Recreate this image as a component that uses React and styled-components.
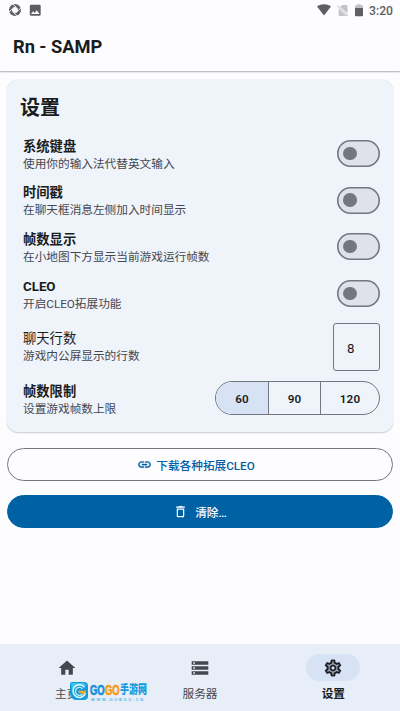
import React, { useState } from "react";
import styled, { createGlobalStyle } from "styled-components";
import {
    MdHome,
    MdImage,
    MdLink,
    MdOutlineDelete,
    MdOutlineSettings,
    MdStorage,
} from "react-icons/md";

const ink = "#191c20";
const muted = "#45474e";
const outline = "#73777f";
const primary = "#0061a4";
const selected = "#d7e3f5";

const GlobalStyle = createGlobalStyle`
    * {
        box-sizing: border-box;
    }

    body {
        margin: 0;
        background: #fdfcff;
        color: ${ink};
        font-family: Roboto, "Noto Sans CJK SC", sans-serif;
    }

    button, input {
        font-family: inherit;
        color: inherit;
        margin: 0;
        padding: 0;
    }
`;

const Screen = styled.div`
    display: flex;
    flex-direction: column;
    width: 400px;
    height: 711px;
    overflow: hidden;
`;

const StatusBar = styled.div`
    display: flex;
    justify-content: space-between;
    align-items: center;
    height: 20px;
    flex: none;
    padding: 0 7px 0 8px;
    color: #5f5f61;
    font-size: 12.2px;
    font-weight: 500;
`;

const StatusGroup = styled.div`
    display: flex;
    align-items: center;
    gap: ${(props) => props.gap}px;
`;

const Clock = styled.span`
    line-height: 20px;
    padding-top: 1px;
`;

const AppBar = styled.header`
    display: flex;
    align-items: center;
    height: 51px;
    flex: none;
    padding: 1px 0 0 13px;
    font-size: 18.3px;
    font-weight: 700;
    letter-spacing: -0.05px;
    box-shadow: 0 1px 1.5px rgba(0, 0, 0, 0.32);
`;

const Content = styled.main`
    display: flex;
    flex-direction: column;
    flex: 1;
    padding: 9px 7px 0;
`;

const Card = styled.section`
    height: 352px;
    padding: 13px 13px 0 16px;
    margin-bottom: 16px;
    border-radius: 11px;
    background: #eff3fa;
    box-shadow: 0 0.5px 1.5px rgba(0, 0, 0, 0.2);
`;

const CardTitle = styled.h2`
    margin: 0 0 7px -3px;
    font-size: 20px;
    line-height: 30px;
    font-weight: 700;
`;

const SettingRow = styled.div`
    display: flex;
    align-items: center;
    justify-content: space-between;
    height: ${(props) => props.height || 46.7}px;
`;

const SettingText = styled.div`
    padding-top: ${(props) => props.shift}px;
`;

const SettingName = styled.div`
    font-size: 13.3px;
    line-height: 18px;
    font-weight: ${(props) => (props.light ? 400 : 700)};
`;

const SettingHint = styled.div`
    font-size: 11.67px;
    line-height: 17px;
    color: ${muted};
`;

const Track = styled.button`
    display: flex;
    align-items: center;
    width: 43.5px;
    height: 27px;
    padding-left: 6.5px;
    border: none;
    border-radius: 14px;
    background: #dfe2eb;
    box-shadow: inset 0 0 0 1.6px ${outline};
`;

const Thumb = styled.span`
    width: 13.5px;
    height: 13.5px;
    border-radius: 50%;
    background: ${outline};
    transform: translateX(${(props) => (props.on ? 16 : 0)}px);
`;

const NumberField = styled.input`
    width: 47px;
    height: 48px;
    padding: 2px 0 0 13px;
    border: 1px solid ${outline};
    border-radius: 3px;
    background: transparent;
    font-size: 13.3px;
    outline: none;
`;

const Segments = styled.div`
    display: flex;
    width: 165px;
    height: 34px;
    border: 1px solid ${outline};
    border-radius: 17px;
    overflow: hidden;
`;

const Segment = styled.button`
    width: ${(props) => props.width}px;
    border: none;
    border-left: ${(props) => (props.first ? "none" : `1px solid ${outline}`)};
    padding-top: 1px;
    background: ${(props) => (props.active ? selected : "transparent")};
    font-size: 11.67px;
    font-weight: 600;
    letter-spacing: 0.1px;
`;

const WideButton = styled.button`
    display: flex;
    align-items: center;
    justify-content: center;
    gap: ${(props) => props.gap}px;
    height: 33px;
    flex: none;
    margin-bottom: 14px;
    padding: 0 ${(props) => (props.filled ? 0 : 8)}px 1px 0;
    border: 1px solid ${(props) => (props.filled ? primary : outline)};
    border-radius: 17px;
    background: ${(props) => (props.filled ? primary : "transparent")};
    color: ${(props) => (props.filled ? "#fff" : primary)};
    font-size: 11.67px;
    font-weight: 500;
`;

const LinkIcon = styled(MdLink)`
    path:not([fill="none"]) {
        stroke: currentColor;
        stroke-width: 0.5px;
    }
`;

const NavBar = styled.nav`
    position: relative;
    display: grid;
    grid-template-columns: repeat(3, 1fr);
    height: 67px;
    flex: none;
    padding-top: 10px;
    background: #e8eef7;
`;

const NavItem = styled.div`
    display: flex;
    flex-direction: column;
    align-items: center;
    color: ${(props) => (props.active ? ink : muted)};
    font-size: 11.67px;
    line-height: 17px;
    font-weight: ${(props) => (props.active ? 700 : 400)};
`;

const NavIcon = styled.span`
    display: flex;
    align-items: center;
    justify-content: center;
    width: 54px;
    height: 27px;
    margin-bottom: 5px;
    border-radius: 14px;
    background: ${(props) => (props.active ? selected : "transparent")};
`;

const GearIcon = styled(MdOutlineSettings)`
    background: radial-gradient(
        circle,
        transparent 2.5px,
        #a9b4c5 3px,
        #a9b4c5 6px,
        transparent 6.5px
    );

    path:not([fill="none"]) {
        stroke: currentColor;
        stroke-width: 0.3px;
    }
`;

const Watermark = styled.div`
    position: absolute;
    left: 70px;
    top: 38px;
    display: flex;
    gap: 2px;
`;

const WatermarkText = styled.div`
    display: flex;
    flex-direction: column;
    width: 57px;
`;

const WatermarkName = styled.div`
    display: flex;
    align-items: center;
    height: 16px;
    color: #159be0;
`;

const WatermarkGo = styled.span`
    width: 15px;
    color: ${(props) => props.color};
    font-family: "Liberation Sans", Roboto, sans-serif;
    font-size: 15px;
    line-height: 14px;
    font-weight: 700;
    transform: scaleX(0.63);
    transform-origin: left;
    -webkit-text-stroke: 0.7px ${(props) => props.color};
`;

const WatermarkHan = styled.span`
    width: 27px;
    font-size: 12px;
    line-height: 14px;
    font-weight: 900;
    white-space: nowrap;
    transform: scaleX(0.75);
    transform-origin: left;
`;

const WatermarkSite = styled.div`
    padding-left: 1px;
    color: #52b6e9;
    font-family: "Liberation Sans", sans-serif;
    font-size: 4px;
    line-height: 4px;
    font-weight: 700;
    letter-spacing: 1.6px;
    white-space: nowrap;
`;

const ApertureIcon = () => (
    <svg width="14" height="14" viewBox="0 0 14 14">
        <circle
            cx="7"
            cy="7"
            r="4.5"
            fill="none"
            stroke="#5f5f61"
            strokeWidth="3"
        />
        <path
            d="M4.6 .8 8 4.2M13.2 4.6 9.8 8M9.4 13.2 6 9.8M.8 9.4 4.2 6"
            stroke="#fdfcff"
            strokeWidth="1"
        />
    </svg>
);

const WifiIcon = () => (
    <svg width="14" height="12" viewBox="0 0 14 12">
        <path d="M0 2.6C4 -.5 10 -.5 14 2.6L7 11.5Z" fill="#5f5f61" />
    </svg>
);

const NoSimIcon = () => (
    <svg width="12" height="13" viewBox="0 0 12 13">
        <path
            d="M5 1h4.5q1 0 1 1v7.6L3.2 2.8ZM1.6 4.4 9.6 12h-7q-1 0-1-1Z"
            fill="#c4c4c6"
        />
        <path d="m.5 1.8 10.7 10.4" stroke="#bababc" strokeWidth="1" />
    </svg>
);

const BatteryIcon = () => (
    <svg width="8" height="13" viewBox="0 0 8 13">
        <path d="M0 4V2q0-.8.8-.8h1.5V.2h3.4v1h1.5q.8 0 .8.8v2Z" fill="#c1c1c3" />
        <path d="M0 4h8v7.5q0 .8-.8.8H.8q-.8 0-.8-.8Z" fill="#5f5f61" />
    </svg>
);

const WatermarkLogo = () => (
    <svg width="18" height="18" viewBox="0 0 18 18">
        <path d="M2 0h12q4 0 4 4v10q0 4-4 4H7q-6 0-7-6V2q0-2 2-2Z" fill="#139ddb" />
        <path d="M1 1h13l3 3-7-1-8 4Z" fill="#3fc3ef" />
        <path
            d="M14.5 5.2A6.4 6.4 0 1 0 15.5 11"
            fill="none"
            stroke="#e9f9ff"
            strokeWidth="1.5"
        />
        <path
            d="M12.5 6.8A4 4 0 1 0 12.5 12"
            fill="none"
            stroke="#b8ecfa"
            strokeWidth="1.3"
        />
        <path d="M8 8.8h8q-.3 3.2-3 4.2l-1-2H9Z" fill="#f8ac25" />
    </svg>
);

const toggles = [
    { name: "系统键盘", hint: "使用你的输入法代替英文输入" },
    { name: "时间戳", hint: "在聊天框消息左侧加入时间显示" },
    { name: "帧数显示", hint: "在小地图下方显示当前游戏运行帧数" },
    { name: "CLEO", hint: "开启CLEO拓展功能" },
];

const limits = [
    { value: 60, width: 52 },
    { value: 90, width: 52 },
    { value: 120, width: 59 },
];

const ToggleRow = ({ name, hint }) => {
    const [on, setOn] = useState(false);

    return (
        <SettingRow>
            <SettingText shift={3.6}>
                <SettingName>{name}</SettingName>
                <SettingHint>{hint}</SettingHint>
            </SettingText>
            <Track role="switch" aria-checked={on} onClick={() => setOn(!on)}>
                <Thumb on={on ? 1 : 0} />
            </Track>
        </SettingRow>
    );
};

const App = () => {
    const [limit, setLimit] = useState(60);

    return (
        <Screen>
            <GlobalStyle />
            <StatusBar>
                <StatusGroup gap={6}>
                    <ApertureIcon />
                    <MdImage size={14.5} />
                </StatusGroup>
                <StatusGroup gap={6}>
                    <WifiIcon />
                    <NoSimIcon />
                    <BatteryIcon />
                    <Clock>3:20</Clock>
                </StatusGroup>
            </StatusBar>
            <AppBar>Rn - SAMP</AppBar>
            <Content>
                <Card>
                    <CardTitle>设置</CardTitle>
                    {toggles.map((item) => (
                        <ToggleRow key={item.name} {...item} />
                    ))}
                    <SettingRow height={61}>
                        <SettingText shift={0}>
                            <SettingName light>聊天行数</SettingName>
                            <SettingHint>游戏内公屏显示的行数</SettingHint>
                        </SettingText>
                        <NumberField defaultValue="8" />
                    </SettingRow>
                    <SettingRow height={41}>
                        <SettingText shift={4}>
                            <SettingName>帧数限制</SettingName>
                            <SettingHint>设置游戏帧数上限</SettingHint>
                        </SettingText>
                        <Segments>
                            {limits.map(({ value, width }, index) => (
                                <Segment
                                    key={value}
                                    width={width}
                                    first={index === 0 ? 1 : 0}
                                    active={value === limit ? 1 : 0}
                                    onClick={() => setLimit(value)}
                                >
                                    {value}
                                </Segment>
                            ))}
                        </Segments>
                    </SettingRow>
                </Card>
                <WideButton gap={4}>
                    <LinkIcon size={15} />
                    下载各种拓展CLEO
                </WideButton>
                <WideButton gap={7} filled={1}>
                    <MdOutlineDelete size={15} />
                    清除…
                </WideButton>
            </Content>
            <NavBar>
                <NavItem>
                    <NavIcon>
                        <MdHome size={20} />
                    </NavIcon>
                    主页
                </NavItem>
                <NavItem>
                    <NavIcon>
                        <MdStorage size={20} />
                    </NavIcon>
                    服务器
                </NavItem>
                <NavItem active={1}>
                    <NavIcon active={1}>
                        <GearIcon size={20} />
                    </NavIcon>
                    设置
                </NavItem>
                <Watermark>
                    <WatermarkLogo />
                    <WatermarkText>
                        <WatermarkName>
                            <WatermarkGo color="#168fd8">GO</WatermarkGo>
                            <WatermarkGo color="#f99a12">GO</WatermarkGo>
                            <WatermarkHan>手游网</WatermarkHan>
                        </WatermarkName>
                        <WatermarkSite>WWW.GOBGO.CN</WatermarkSite>
                    </WatermarkText>
                </Watermark>
            </NavBar>
        </Screen>
    );
};

export default App;
